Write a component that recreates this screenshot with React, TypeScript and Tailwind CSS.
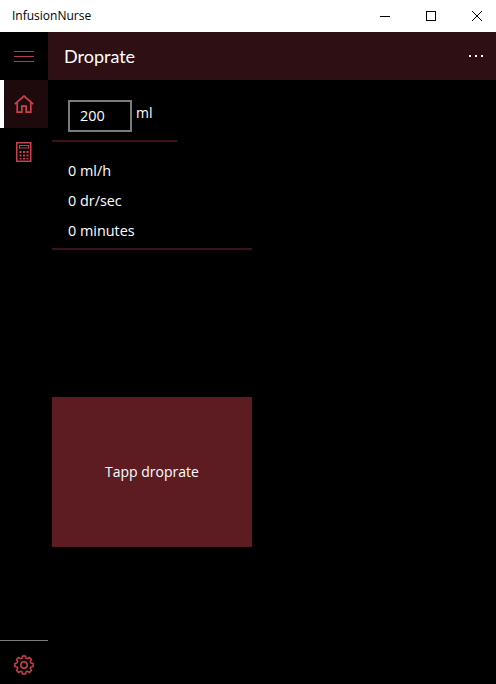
const ACCENT = "#cc3f4c";

function HamburgerIcon() {
  return (
    <svg width="20" height="11" viewBox="0 0 20 11" fill="none" stroke="#b8394a" strokeWidth="1">
      <path d="M0 .5h20M0 5.5h20M0 10.5h20" />
    </svg>
  );
}

function HomeIcon() {
  return (
    <svg width="20" height="18" viewBox="0 0 20 18" fill="none" stroke={ACCENT} strokeWidth="1.7">
      <path d="M.8 9.2 10 1l9.2 8.2" />
      <path d="M3.2 7.5v9.6h4.6v-6h4.4v6h4.6V7.5" />
    </svg>
  );
}

function CalculatorIcon() {
  return (
    <svg width="16" height="20" viewBox="0 0 16 20" fill="none" stroke={ACCENT}>
      <rect x=".75" y=".75" width="14" height="18.5" strokeWidth="1.5" />
      <rect x="3.5" y="3.5" width="9" height="2.5" strokeWidth="1" />
      <path
        d="M3.5 9h2v2h-2zM7 9h2v2H7zM10.5 9h2v2h-2zM3.5 12.5h2v2h-2zM7 12.5h2v2H7zM10.5 12.5h2v2h-2zM3.5 16h2v1.5h-2zM7 16h2v1.5H7zM10.5 16h2v1.5h-2z"
        fill={ACCENT}
        stroke="none"
      />
    </svg>
  );
}

function gearPath() {
  const teeth = 8;
  const pts: string[] = [];
  for (let i = 0; i < teeth; i++) {
    const a = (i / teeth) * Math.PI * 2;
    const step = (Math.PI * 2) / teeth;
    const corners: [number, number][] = [
      [7.2, a - step * 0.36],
      [9.2, a - step * 0.2],
      [9.2, a + step * 0.2],
      [7.2, a + step * 0.36],
    ];
    for (const [r, t] of corners) {
      pts.push(`${(10 + r * Math.cos(t)).toFixed(2)} ${(10 + r * Math.sin(t)).toFixed(2)}`);
    }
  }
  return `M${pts.join("L")}Z`;
}

function GearIcon() {
  return (
    <svg width="20" height="20" viewBox="0 0 20 20" fill="none" stroke={ACCENT} strokeWidth="1.5">
      <path d={gearPath()} />
      <circle cx="10" cy="10" r="3.2" />
    </svg>
  );
}

function WindowControls() {
  return (
    <div className="-mr-1 ml-auto flex">
      <span className="flex w-[46px] justify-center">
        <svg width="10" height="10" viewBox="0 0 10 10" stroke="#000" fill="none" shapeRendering="crispEdges">
          <path d="M0 5.5h10" />
        </svg>
      </span>
      <span className="flex w-[46px] justify-center">
        <svg width="10" height="10" viewBox="0 0 10 10" stroke="#000" fill="none" shapeRendering="crispEdges">
          <rect x=".5" y=".5" width="9" height="9" />
        </svg>
      </span>
      <span className="flex w-[46px] justify-center">
        <svg width="10" height="10" viewBox="0 0 10 10" stroke="#000" fill="none">
          <path d="M0 0l10 10M10 0 0 10" />
        </svg>
      </span>
    </div>
  );
}

export default function App() {
  return (
    <div className="flex h-[684px] w-[496px] flex-col overflow-hidden bg-black font-['Open_Sans',sans-serif] text-white">
      <div className="flex h-8 shrink-0 items-center bg-white text-black">
        <span className="ml-3 text-xs">InfusionNurse</span>
        <WindowControls />
      </div>

      <div className="flex min-h-0 flex-1">
        <nav className="flex w-12 shrink-0 flex-col">
          <div className="flex h-12 items-center justify-center"><HamburgerIcon /></div>
          <div className="flex h-12 items-center justify-center border-l-4 border-white bg-[#1e0a0d] pr-1"><HomeIcon /></div>
          <div className="flex h-12 items-center justify-center"><CalculatorIcon /></div>
          <div className="mt-auto flex h-[44px] items-center justify-center border-t border-[#7a7a7a] pt-1"><GearIcon /></div>
        </nav>

        <div className="flex min-w-0 flex-1 flex-col">
          <header className="flex h-12 shrink-0 items-center justify-between bg-[#2e0f13] pr-3 pl-4">
            <h1 className="font-['Lato',sans-serif] text-[18px] leading-none">Droprate</h1>
            <div className="flex gap-1 pr-[1px]">
              <span className="size-[2px] bg-white" />
              <span className="size-[2px] bg-white" />
              <span className="size-[2px] bg-white" />
            </div>
          </header>

          <main className="flex flex-col pl-1">
            <div className="flex w-[125px] items-start gap-1 border-b-2 border-[#3a1217] pt-5 pb-2 pl-4">
              <div className="flex h-8 w-16 shrink-0 items-center border-2 border-[#7a7a7a] pl-[10px] text-[14.4px]">200</div>
              <span className="pt-[1px] text-sm leading-6">ml</span>
            </div>

            <div className="flex w-[200px] flex-col border-b-2 border-[#3a1217] pt-[14px] pb-[2px] pl-4 text-[14.4px]">
              <div className="flex h-[30px] items-center">0 ml/h</div>
              <div className="flex h-[30px] items-center">0 dr/sec</div>
              <div className="flex h-[30px] items-center">0 minutes</div>
            </div>

            <button
              type="button"
              className="mt-[147px] flex h-[150px] w-[200px] items-center justify-center bg-[#5c1c22] text-sm text-white"
            >
              Tapp droprate
            </button>
          </main>
        </div>
      </div>
    </div>
  );
}
